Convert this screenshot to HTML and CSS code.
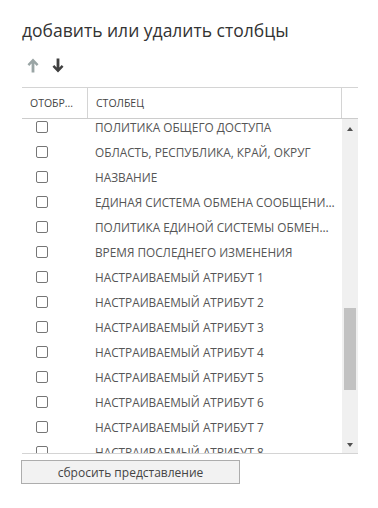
FILE: index.html
```html
<!DOCTYPE html>
<html lang="ru">
<head>
<meta charset="utf-8">
<title>столбцы</title>
<link rel="stylesheet" href="styles.css">
</head>
<body>
<div class="panel">
  <h1 class="title">добавить или удалить столбцы</h1>
  <div class="tools">
    <span class="tool tool-off" aria-label="вверх">
      <svg width="12" height="15" viewBox="0 0 12 15"><path d="M6 0.5 L0.5 6.2 L2.3 8 L4.6 5.6 V14.5 H7.4 V5.6 L9.7 8 L11.5 6.2 Z" fill="currentColor"/></svg>
    </span>
    <span class="tool" aria-label="вниз">
      <svg width="12" height="15" viewBox="0 0 12 15"><path d="M6 14.5 L0.5 8.8 L2.3 7 L4.6 9.4 V0.5 H7.4 V9.4 L9.7 7 L11.5 8.8 Z" fill="currentColor"/></svg>
    </span>
  </div>
  <div class="grid">
    <div class="head">
      <div class="hcell hcell-show">ОТОБР...</div>
      <div class="hcell hcell-col">СТОЛБЕЦ</div>
      <div class="hcell hcell-end"></div>
    </div>
    <div class="body">
      <div class="viewport">
        <ul class="rows">
          <li class="row"><span class="box"></span><span class="name">ПОЛИТИКА ОБЩЕГО ДОСТУПА</span></li>
          <li class="row"><span class="box"></span><span class="name">ОБЛАСТЬ, РЕСПУБЛИКА, КРАЙ, ОКРУГ</span></li>
          <li class="row"><span class="box"></span><span class="name">НАЗВАНИЕ</span></li>
          <li class="row"><span class="box"></span><span class="name">ЕДИНАЯ СИСТЕМА ОБМЕНА СООБЩЕНИЯМИ</span></li>
          <li class="row"><span class="box"></span><span class="name">ПОЛИТИКА ЕДИНОЙ СИСТЕМЫ ОБМЕНА СООБЩЕНИЯМИ</span></li>
          <li class="row"><span class="box"></span><span class="name">ВРЕМЯ ПОСЛЕДНЕГО ИЗМЕНЕНИЯ</span></li>
          <li class="row"><span class="box"></span><span class="name">НАСТРАИВАЕМЫЙ АТРИБУТ 1</span></li>
          <li class="row"><span class="box"></span><span class="name">НАСТРАИВАЕМЫЙ АТРИБУТ 2</span></li>
          <li class="row"><span class="box"></span><span class="name">НАСТРАИВАЕМЫЙ АТРИБУТ 3</span></li>
          <li class="row"><span class="box"></span><span class="name">НАСТРАИВАЕМЫЙ АТРИБУТ 4</span></li>
          <li class="row"><span class="box"></span><span class="name">НАСТРАИВАЕМЫЙ АТРИБУТ 5</span></li>
          <li class="row"><span class="box"></span><span class="name">НАСТРАИВАЕМЫЙ АТРИБУТ 6</span></li>
          <li class="row"><span class="box"></span><span class="name">НАСТРАИВАЕМЫЙ АТРИБУТ 7</span></li>
          <li class="row"><span class="box"></span><span class="name">НАСТРАИВАЕМЫЙ АТРИБУТ 8</span></li>
        </ul>
      </div>
      <div class="scrollbar">
        <div class="sb-btn"><span class="tri tri-up"></span></div>
        <div class="sb-track"><div class="sb-thumb"></div></div>
        <div class="sb-btn"><span class="tri tri-down"></span></div>
      </div>
    </div>
  </div>
  <button class="reset" type="button">сбросить представление</button>
</div>
</body>
</html>
```
FILE: styles.css
```css
html, body {
  margin: 0;
  padding: 0;
  background: #ffffff;
}
body {
  font-family: "Open Sans", "Noto Sans", "Liberation Sans", sans-serif;
  color: #444444;
}
.panel {
  padding: 17px 20px 0 22px;
  display: flex;
  flex-direction: column;
}
.title {
  margin: 0;
  font-size: 17.5px;
  font-weight: 400;
  line-height: 26px;
  color: #333333;
}
.tools {
  display: flex;
  gap: 13px;
  margin-top: 14px;
  padding-left: 5px;
  height: 17px;
  align-items: center;
}
.tool {
  display: flex;
  color: #3f3f3f;
}
.tool-off {
  color: #9aa5a5;
}
.grid {
  margin-top: 13px;
  width: 336px;
  border-top: 1px solid #d4d4d4;
  border-bottom: 1px solid #d4d4d4;
}
.head {
  display: flex;
  height: 30px;
  border-bottom: 1px solid #cccccc;
}
.hcell {
  display: flex;
  align-items: center;
  font-size: 10.5px;
  color: #444444;
  padding-left: 8px;
}
.hcell-show {
  width: 57px;
  border-right: 1px solid #d4d4d4;
}
.hcell-col {
  flex: 1;
  border-right: 1px solid #d4d4d4;
}
.hcell-end {
  width: 16px;
  padding: 0;
}
.body {
  display: flex;
  height: 334px;
}
.viewport {
  flex: 1;
  overflow: hidden;
}
.rows {
  list-style: none;
  margin: -5px 0 0 0;
  padding: 0;
}
.row {
  display: flex;
  align-items: center;
  height: 25px;
}
.box {
  width: 10px;
  height: 10px;
  border: 1px solid #767676;
  border-radius: 2px;
  margin-left: 14px;
  flex: none;
}
.name {
  margin-left: 47px;
  font-size: 11.8px;
  color: #555555;
  white-space: nowrap;
  overflow: hidden;
  text-overflow: ellipsis;
  padding-right: 6px;
}
.scrollbar {
  width: 16px;
  background: #f0f0f0;
  display: flex;
  flex-direction: column;
}
.sb-btn {
  height: 18px;
  display: flex;
  align-items: center;
  justify-content: center;
}
.tri {
  width: 0;
  height: 0;
  border-left: 3.5px solid transparent;
  border-right: 3.5px solid transparent;
}
.tri-up {
  border-bottom: 4px solid #505050;
  margin-top: 1px;
}
.tri-down {
  border-top: 4px solid #505050;
  margin-top: 2px;
}
.sb-track {
  flex: 1;
  padding: 0 2px;
}
.sb-thumb {
  margin-top: 171px;
  height: 82px;
  background: #c2c2c2;
}
.reset {
  margin-top: 6px;
  width: 219px;
  height: 24px;
  margin-left: -1px;
  border: 1px solid #adadad;
  background: #f2f2f2;
  font-family: "Open Sans", "Noto Sans", "Liberation Sans", sans-serif;
  font-size: 12px;
  color: #444444;
  padding: 0;
}
```
